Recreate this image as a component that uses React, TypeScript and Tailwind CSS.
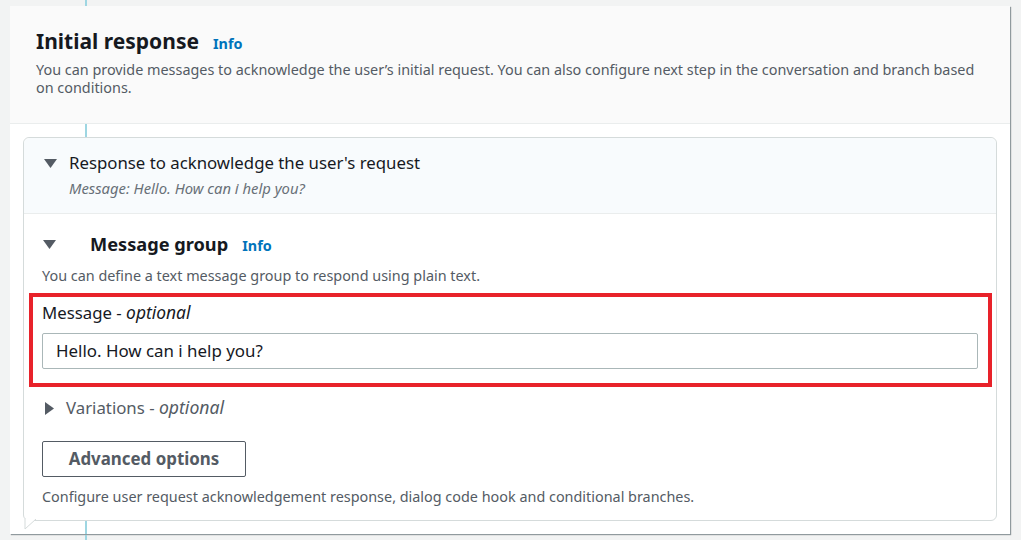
import React from 'react';

const font = { fontFamily: '"Noto Sans", "Open Sans", Arial, sans-serif' };

function CaretDown({ className = '' }: { className?: string }) {
  return (
    <svg width="13" height="9" viewBox="0 0 13 9" className={className}>
      <path d="M0 0 L13 0 L6.5 9 Z" fill="#545b64" />
    </svg>
  );
}

function CaretRight({ className = '' }: { className?: string }) {
  return (
    <svg width="9" height="13" viewBox="0 0 9 13" className={className}>
      <path d="M0 0 L9 6.5 L0 13 Z" fill="#545b64" />
    </svg>
  );
}

function Info() {
  return <span className="text-[14.4px] font-bold text-[#0073bb] leading-[20px]">Info</span>;
}

export default function App() {
  return (
    <div className="relative h-[540px] w-[1021px] overflow-hidden bg-[#f2f3f3] pl-[10px] pr-[11px] pt-[6px]" style={font}>
      {/* connector line above the card */}
      <div className="absolute left-[85px] top-0 h-[6px] w-[2px] bg-[#9ed6e2]" />

      <div className="relative w-[1000px] bg-white shadow-[1px_1px_1px_0_rgba(0,28,36,0.3),1px_1px_1px_0_rgba(0,28,36,0.15)]">
        {/* header */}
        <div className="border-b border-[#eaeded] bg-[#fafafa] px-[26px] pb-[26px] pt-[20px]">
          <div className="flex items-baseline gap-[14px]">
            <h2 className="text-[21px] font-bold leading-[30px] text-[#16191f]">Initial response</h2>
            <Info />
          </div>
          <p className="mt-[5px] text-[14.4px] leading-[18px] text-[#545b64]">
            You can provide messages to acknowledge the user’s initial request. You can also configure next step in the conversation and branch based on conditions.
          </p>
        </div>

        {/* body */}
        <div className="relative px-[13px] py-[13px]">
          <div className="absolute left-[75px] top-0 h-full w-[2px] bg-[#9ed6e2]" />

          <div className="relative rounded-[6px] border border-[#d5dbdb] bg-white">
            <div className="rounded-t-[6px] border-b border-[#eaeded] bg-[#f8fbfd] pb-[16px] pl-[20px] pt-[14px]">
              <div className="flex items-center gap-[12px]">
                <CaretDown />
                <span className="text-[16.8px] leading-[22px] text-[#16191f]">Response to acknowledge the user's request</span>
              </div>
              <p className="mt-[5px] pl-[25px] text-[14.8px] italic leading-[18px] text-[#687078]">Message: Hello. How can i help you?</p>
            </div>

            <div className="px-[18px] pb-[14px] pt-[18px]">
              <div className="flex items-center">
                <CaretDown className="ml-[1px]" />
                <div className="ml-[34px] flex items-baseline gap-[14px]">
                  <h3 className="text-[18.2px] font-bold leading-[24px] text-[#16191f]">Message group</h3>
                  <Info />
                </div>
              </div>
              <p className="mt-[11px] text-[14.4px] leading-[18px] text-[#545b64]">
                You can define a text message group to respond using plain text.
              </p>

              <div className="relative mt-[17px]">
                <div className="pointer-events-none absolute -bottom-[18px] -left-[13px] -right-[14px] -top-[9px] border-[4px] border-[#e8222a]" />
                <label className="block h-[22px] text-[16.8px] leading-[22px] text-[#16191f]">
                  Message - <i className="text-[17.4px] leading-none">optional</i>
                </label>
                <div className="mt-[9px] flex h-[36px] items-center rounded-[2px] border border-[#aab7b8] bg-white px-[13px] text-[16.9px] text-[#16191f]">
                  Hello. How can i help you?
                </div>
              </div>

              <div className="mt-[28px] flex h-[22px] items-center gap-[12px] pl-[3px]">
                <CaretRight />
                <span className="text-[16.8px] leading-[22px] text-[#545b64]">
                  Variations - <i className="text-[17.6px] leading-none">optional</i>
                </span>
              </div>

              <button className="mt-[22px] flex h-[36px] w-[204px] items-center justify-center rounded-[2px] border border-[#545b64] bg-white text-[16.9px] font-bold text-[#545b64]">
                Advanced options
              </button>

              <p className="mt-[11px] text-[14.4px] leading-[18px] text-[#545b64]">
                Configure user request acknowledgement response, dialog code hook and conditional branches.
              </p>
            </div>

            {/* speech tail at bottom-left */}
            <svg width="14" height="12" viewBox="0 0 14 12" className="absolute -bottom-[11px] left-[0px]">
              <path d="M1 0 L1 10 L12 0" fill="white" stroke="#d5dbdb" strokeWidth="1" />
            </svg>
          </div>
        </div>
      </div>
      <div className="absolute bottom-0 left-[85px] h-[5px] w-[2px] bg-[#9ed6e2]" />
    </div>
  );
}
